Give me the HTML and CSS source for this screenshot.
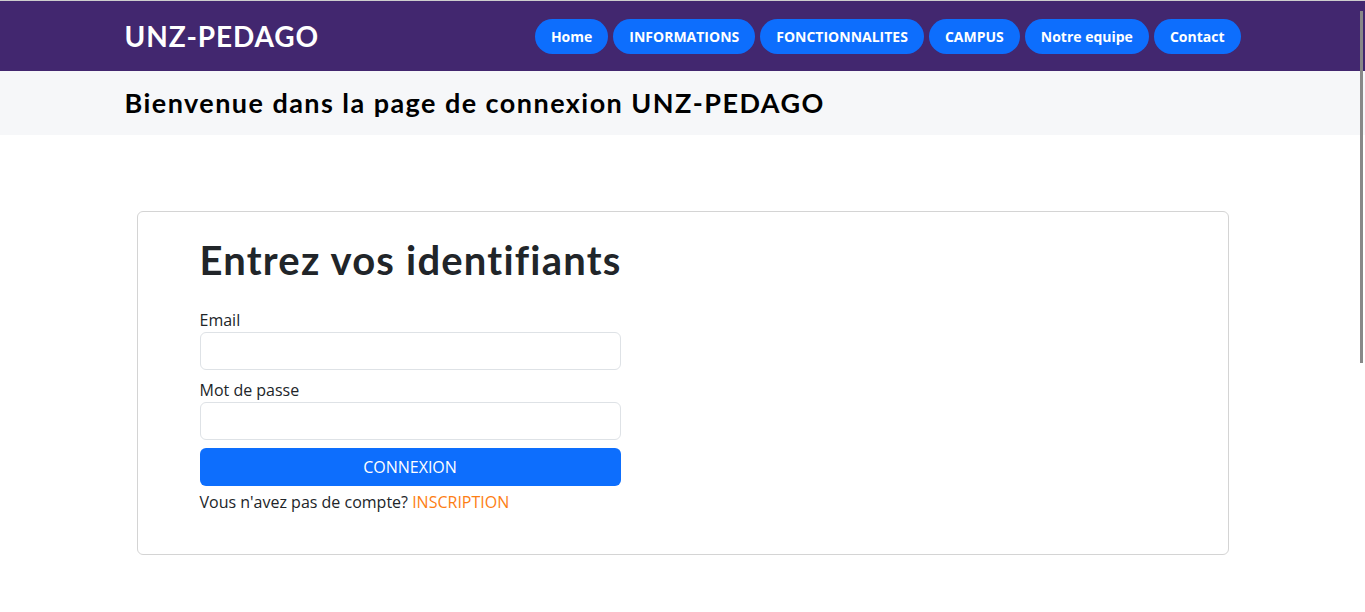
FILE: index.html
```html
<!DOCTYPE html>
<html lang="fr">
<head>
<meta charset="utf-8">
<title>UNZ-PEDAGO - Connexion</title>
<link rel="stylesheet" href="styles.css">
</head>
<body>
<header class="topbar">
  <div class="container topbar-inner">
    <a class="brand" href="#">UNZ-PEDAGO</a>
    <nav class="nav">
      <a class="pill" href="#">Home</a>
      <a class="pill" href="#">INFORMATIONS</a>
      <a class="pill" href="#">FONCTIONNALITES</a>
      <a class="pill" href="#">CAMPUS</a>
      <a class="pill" href="#">Notre equipe</a>
      <a class="pill" href="#">Contact</a>
    </nav>
  </div>
</header>
<section class="welcome">
  <div class="container">
    <h2 class="welcome-title">Bienvenue dans la page de connexion UNZ-PEDAGO</h2>
  </div>
</section>
<main class="container main">
  <div class="card">
    <form class="login">
      <h1 class="login-title">Entrez vos identifiants</h1>
      <label class="label" for="email">Email</label>
      <input class="input" id="email" type="email">
      <label class="label label-2" for="pwd">Mot de passe</label>
      <input class="input" id="pwd" type="password">
      <button class="btn" type="button">CONNEXION</button>
      <p class="signup">Vous n'avez pas de compte? <a class="signup-link" href="#">INSCRIPTION</a></p>
    </form>
  </div>
</main>
<div class="scroll-thumb"></div>
</body>
</html>
```
FILE: styles.css
```css
* { box-sizing: border-box; }
html, body { margin: 0; padding: 0; }
body {
  font-family: "Open Sans", "Liberation Sans", sans-serif;
  font-size: 16px;
  line-height: 1.5;
  color: #212529;
  background: #fff;
  border-top: 1px solid #cdcdcd;
}
.container {
  width: 1140px;
  margin: 0 auto;
  padding: 0 12px;
}
.topbar {
  background: #42276f;
  height: 70px;
}
.topbar-inner {
  height: 100%;
  display: flex;
  align-items: center;
  justify-content: space-between;
}
.brand {
  font-family: Lato, "Open Sans", sans-serif;
  font-weight: 700;
  font-size: 28px;
  letter-spacing: 0.9px;
  color: #fff;
  text-decoration: none;
  line-height: 1;
}
.nav {
  display: flex;
  gap: 5px;
}
.pill {
  background: #0d6efd;
  color: #fff;
  font-weight: 700;
  font-size: 14px;
  line-height: 21px;
  padding: 7px 16px;
  border-radius: 18px;
  text-decoration: none;
}
.welcome {
  background: #f6f7f9;
  height: 64px;
  display: flex;
  align-items: center;
}
.welcome-title {
  margin: 0;
  font-family: Lato, "Open Sans", sans-serif;
  font-weight: 700;
  font-size: 27px;
  line-height: 1.2;
  color: #000;
  letter-spacing: 1.45px;
  white-space: nowrap;
}
.main {
  padding-top: 76px;
  padding-left: 24px;
  padding-right: 24px;
}
.card {
  border: 1px solid #d4d4d4;
  border-radius: 6px;
  padding: 24px 62px 40px;
}
.login {
  width: 421px;
  display: flex;
  flex-direction: column;
}
.login-title {
  margin: 0 0 24px;
  font-family: Lato, "Open Sans", sans-serif;
  font-weight: 700;
  font-size: 40px;
  line-height: 48px;
  color: #212529;
  letter-spacing: 1.2px;
  white-space: nowrap;
}
.label {
  display: block;
  line-height: 24px;
}
.label-2 { margin-top: 8px; }
.input {
  height: 38px;
  border: 1px solid #dee2e6;
  border-radius: 6px;
  font: inherit;
  padding: 6px 12px;
}
.btn {
  margin-top: 8px;
  height: 38px;
  border: 0;
  border-radius: 6px;
  background: #0d6efd;
  color: #fff;
  font-family: inherit;
  font-size: 16px;
}
.signup {
  margin: 4px 0 0;
  line-height: 24px;
}
.signup-link {
  color: #fd7e14;
  text-decoration: none;
}
.scroll-thumb {
  position: fixed;
  right: 2px;
  top: 11px;
  width: 3px;
  height: 352px;
  background: #888;
}
```
